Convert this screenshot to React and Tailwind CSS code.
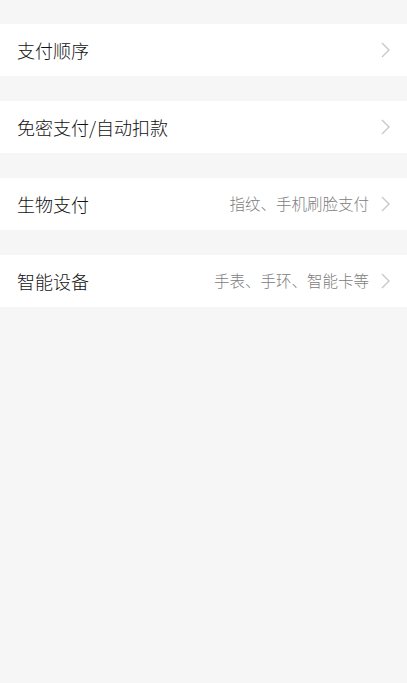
const rows = [
  { title: '支付顺序', hint: '' },
  { title: '免密支付/自动扣款', hint: '' },
  { title: '生物支付', hint: '指纹、手机刷脸支付' },
  { title: '智能设备', hint: '手表、手环、智能卡等' },
];

const Chevron = () => (
  <svg width="9" height="16" viewBox="0 0 9 16" className="shrink-0">
    <path d="M1 1l7 7-7 7" fill="none" stroke="#c8c8c8" strokeWidth="1.4" />
  </svg>
);

export default function App() {
  return (
    <div
      className="min-h-[683px] w-[407px] bg-[#f6f6f6] pt-6"
      style={{ fontFamily: '"Noto Sans CJK SC", "Noto Sans", sans-serif' }}
    >
      <div className="flex flex-col gap-[25px]">
        {rows.map((row) => (
          <div key={row.title} className="flex h-[52px] items-center bg-white pl-[17px] pr-[17px]">
            <span className="flex-1 text-[18px] font-light text-[#111]">{row.title}</span>
            {row.hint && (
              <span className="mr-[12px] text-[15.5px] font-light text-[#808080]">{row.hint}</span>
            )}
            <Chevron />
          </div>
        ))}
      </div>
    </div>
  );
}
